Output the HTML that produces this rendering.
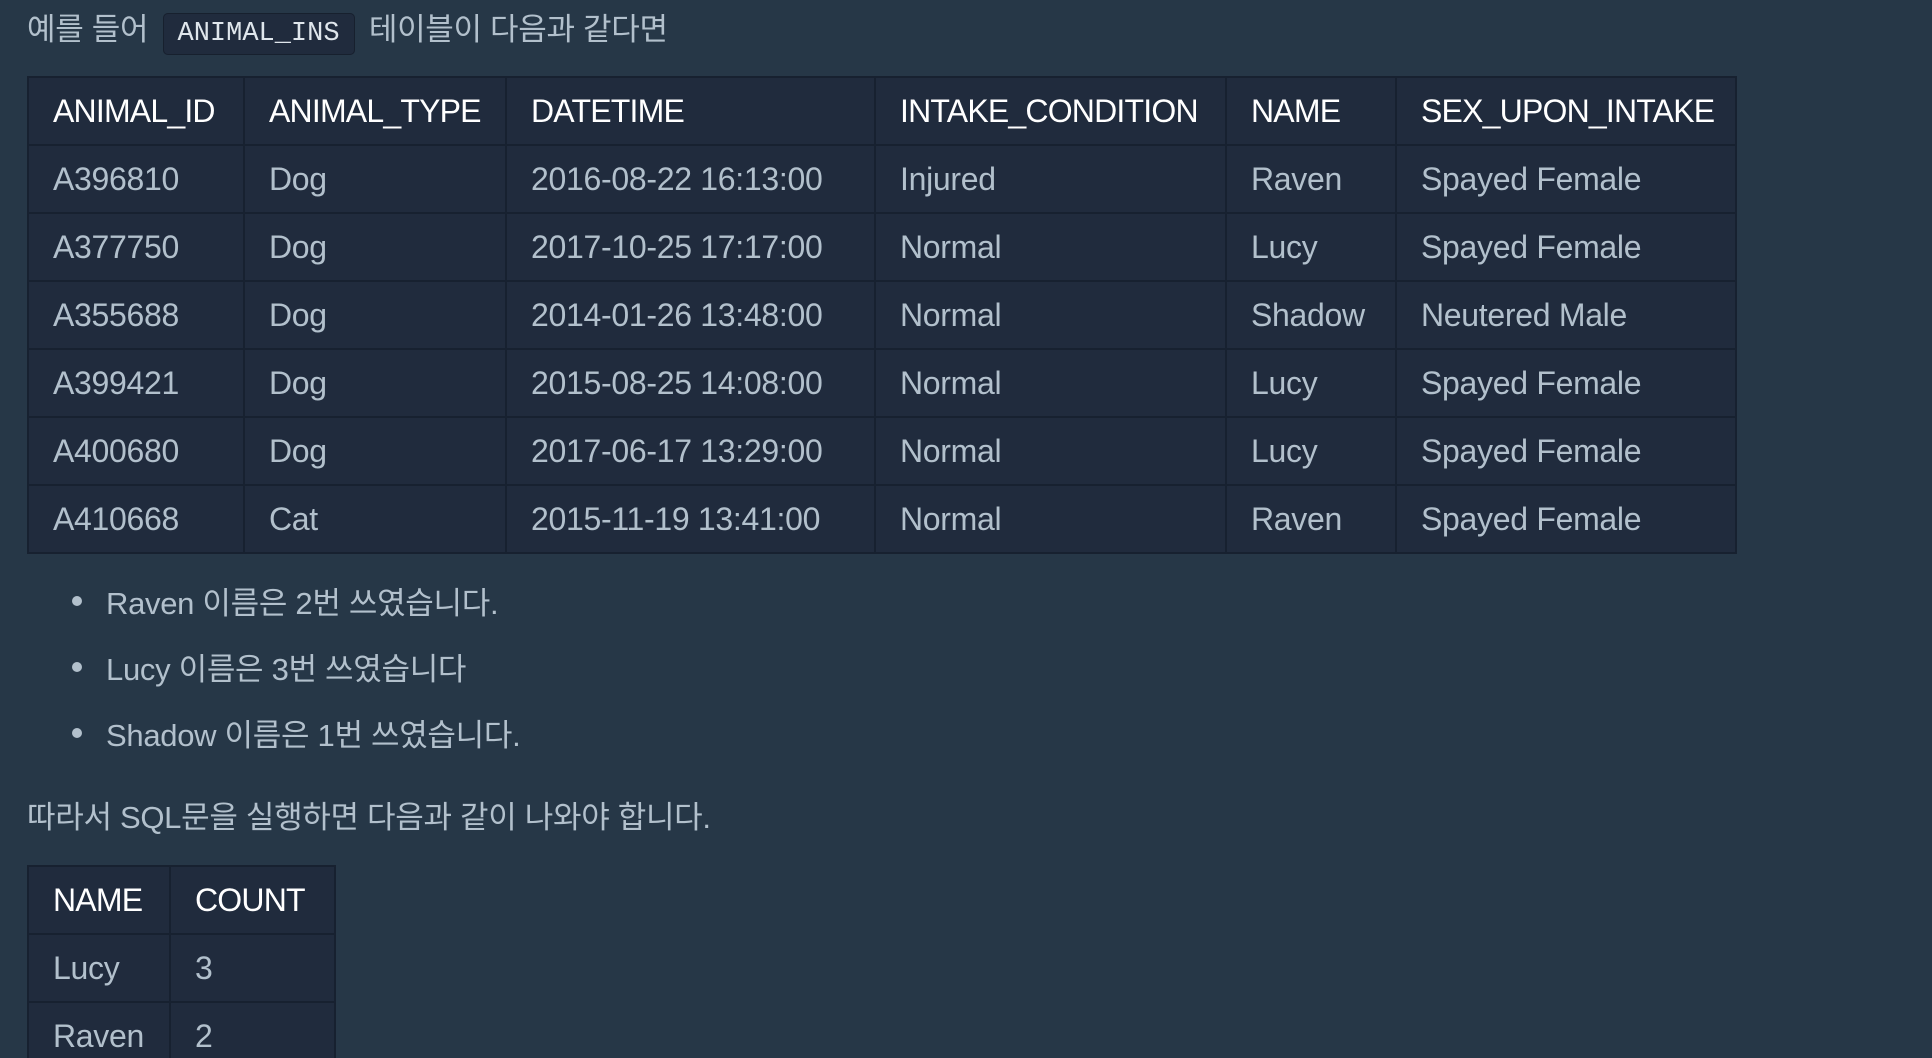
<!DOCTYPE html>
<html><head><meta charset="utf-8"><style>
html,body{margin:0;padding:0;background:#263747;width:1932px;height:1058px;overflow:hidden}
body{font-family:"Liberation Sans","Noto Sans CJK KR",sans-serif;color:#b2c0cc;font-size:31px;position:relative}
.p{position:absolute;left:27px;white-space:nowrap;letter-spacing:-0.3px}
code{font-family:"Liberation Mono",monospace;font-size:27px;background:#202b3d;border:1px solid #17202e;border-radius:5px;padding:5px 14px;color:#dfe6ec;letter-spacing:0;margin:0 6px}
table{position:absolute;left:27px;border-collapse:collapse;background:#202b3d;table-layout:fixed}
td,th{border:2px solid #172130;height:66px;padding:0 0 0 24px;text-align:left;font-weight:normal;white-space:nowrap;letter-spacing:-0.3px;font-size:32px}
th{color:#fff;letter-spacing:-0.8px}
ul{position:absolute;left:0;top:0;margin:0;padding:0;list-style:none}
li{position:absolute;left:106px;white-space:nowrap;letter-spacing:-0.3px}
li:before{content:"";position:absolute;left-34px;left:-34px;top:18px;width:10px;height:10px;border-radius:50%;background:#b2c0cc}
</style></head><body>
<div class="p" style="top:4px">예를 들어 <code>ANIMAL_INS</code> 테이블이 다음과 같다면</div>
<table style="top:76px;width:1708px">
<colgroup><col style="width:216px"><col style="width:262px"><col style="width:369px"><col style="width:351px"><col style="width:170px"><col style="width:340px"></colgroup>
<tr><th>ANIMAL_ID</th><th>ANIMAL_TYPE</th><th>DATETIME</th><th>INTAKE_CONDITION</th><th>NAME</th><th>SEX_UPON_INTAKE</th></tr>
<tr><td>A396810</td><td>Dog</td><td>2016-08-22 16:13:00</td><td>Injured</td><td>Raven</td><td>Spayed Female</td></tr>
<tr><td>A377750</td><td>Dog</td><td>2017-10-25 17:17:00</td><td>Normal</td><td>Lucy</td><td>Spayed Female</td></tr>
<tr><td>A355688</td><td>Dog</td><td>2014-01-26 13:48:00</td><td>Normal</td><td>Shadow</td><td>Neutered Male</td></tr>
<tr><td>A399421</td><td>Dog</td><td>2015-08-25 14:08:00</td><td>Normal</td><td>Lucy</td><td>Spayed Female</td></tr>
<tr><td>A400680</td><td>Dog</td><td>2017-06-17 13:29:00</td><td>Normal</td><td>Lucy</td><td>Spayed Female</td></tr>
<tr><td>A410668</td><td>Cat</td><td>2015-11-19 13:41:00</td><td>Normal</td><td>Raven</td><td>Spayed Female</td></tr>
</table>
<ul>
<li style="top:578px">Raven 이름은 2번 쓰였습니다.</li>
<li style="top:644px">Lucy 이름은 3번 쓰였습니다</li>
<li style="top:710px">Shadow 이름은 1번 쓰였습니다.</li>
</ul>
<div class="p" style="top:792px">따라서 SQL문을 실행하면 다음과 같이 나와야 합니다.</div>
<table style="top:865px;width:307px">
<colgroup><col style="width:142px"><col style="width:165px"></colgroup>
<tr><th>NAME</th><th>COUNT</th></tr>
<tr><td>Lucy</td><td>3</td></tr>
<tr><td>Raven</td><td>2</td></tr>
</table>
</body></html>
